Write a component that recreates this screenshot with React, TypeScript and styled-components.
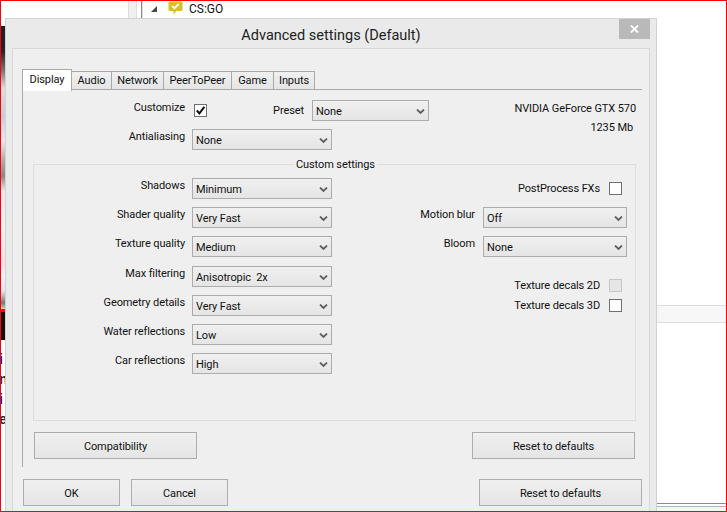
import React from "react";
import styled, { createGlobalStyle } from "styled-components";

const Global = createGlobalStyle`
  html, body { margin: 0; padding: 0; background: #fff; }
  body { font-family: Roboto, "Liberation Sans", sans-serif; font-size: 11px; letter-spacing: -0.1px; color: #111; }
`;

const Desktop = styled.div`
  position: relative; display: flex; box-sizing: border-box; width: 727px; height: 512px;
  border: 1px solid #f00; overflow: hidden; background: #fff;
`;
const LeftStrip = styled.div`
  flex: none; display: flex; flex-direction: column; width: 4px; overflow: hidden;
`;
const StripPhoto = styled.div`
  flex: none; margin-top: 25px; height: 283px;
  background: linear-gradient(180deg,
    #1c1f28 0, #23252c 25px, #777 45px, #ddd 62px, #c8ccd8 90px, #e8e8ee 115px, #aaa 135px, #888 150px, #e8e8ee 165px,
    #f4f0f2 200px, #fbdfe6 235px, #eef2f6 250px, #dfe6f0 265px, #777 277px, #d8d4c0 283px);
`;
const StripRed = styled.div` flex: none; height: 3px; background: #e01414; `;
const StripBlack = styled.div` flex: none; height: 28px; background: #111; `;
const StripLetters = styled.div`
  flex: none; display: flex; flex-direction: column; padding-top: 9px;
`;
const StripLetter = styled.span<{ $blue?: boolean }>`
  height: 20px; font: bold 14px/20px "Liberation Sans", sans-serif;
  margin-left: -2px; color: ${p => (p.$blue ? "#0a0a90" : "#222")};
`;
const Rear = styled.div` flex: 1; display: flex; flex-direction: column; `;
const TreeRow = styled.div`
  flex: none; display: flex; height: 304px; align-items: flex-start; padding-left: 123px;
`;
const Splitter = styled.div`
  flex: none; width: 7px; height: 304px; background: #efefef;
  border-left: 1px solid #ddd; border-right: 1px solid #ddd;
`;
const TreeLine = styled.div`
  flex: none; width: 1px; height: 304px; margin-left: 4px; background: #8a8a8a; box-shadow: 1px 0 0 #ddd;
`;
const TreeArrow = styled.svg` flex: none; margin: 5px 0 0 9px; `;
const TreeIcon = styled.svg` flex: none; margin: 0 0 0 10px; `;
const TreeText = styled.span`
  flex: none; margin: 0 0 0 6px; font: 12px/16px Roboto, sans-serif; letter-spacing: 0; color: #111;
`;
const RightBand = styled.div`
  flex: none; margin-left: auto; width: 69px; height: 16px;
  background: #f7f7f7; border-top: 1px solid #ddd; border-bottom: 1px solid #ddd;
`;
const BottomBand = styled.div`
  flex: none; margin: auto 0 0 auto; width: 69px; height: 7px;
  border-top: 1px solid #8c8c8c;
  background: linear-gradient(180deg, #fff 0 2px, #b4b4b4 2px 3px, #f5f5f5 3px);
`;

const Dialog = styled.div`
  position: absolute; left: 4px; top: 17px; box-sizing: border-box; width: 652px; height: 500px;
  display: flex; flex-direction: column; background: #eaeaea; border: 1px solid #d2d2d2;
`;
const TitleBar = styled.div`
  flex: none; height: 29px; display: flex; align-items: center; justify-content: center;
  font-size: 14.5px; letter-spacing: 0; color: #222; padding-top: 3px; box-sizing: border-box;
`;
const CloseButton = styled.div`
  position: absolute; top: 0; right: 6px; width: 31px; height: 20px; background: #b9b9b9;
  display: flex; align-items: center; justify-content: center;
`;
const Frame = styled.div`
  flex: 1; margin: 0 6px; padding: 20px 7px 0 9px; background: #efefef;
  border: 1px solid #d8d8d8; border-bottom: 0;
`;
const Tabs = styled.div` display: flex; align-items: flex-end; height: 21px; position: relative; `;
const Tab = styled.div<{ $active?: boolean; $w: number }>`
  box-sizing: border-box; width: ${p => p.$w}px; height: ${p => (p.$active ? 22 : 19)}px;
  margin: ${p => (p.$active ? "0 0 -1px" : "0")}; display: flex; align-items: center; justify-content: center;
  border: 1px solid #a9a9a9; border-left-width: ${p => (p.$active ? 1 : 0)}px;
  border-bottom: ${p => (p.$active ? "0" : "1px solid #a9a9a9")};
  background: ${p => (p.$active ? "#fff" : "linear-gradient(180deg,#f0f0f0,#e5e5e5)")};
  position: relative; z-index: ${p => (p.$active ? 1 : 0)};
  padding-bottom: ${p => (p.$active ? 3 : 0)}px; color: #111;
`;
const Pane = styled.div`
  box-sizing: border-box; height: 378px; border-top: 1px solid #a9a9a9; border-left: 1px solid #a9a9a9;
  margin-top: -1px; padding-top: 10px;
`;
const FormRow = styled.div<{ $mt?: number }>`
  display: flex; align-items: center; height: 21px; margin-top: ${p => p.$mt ?? 0}px;
`;
const FieldLabel = styled.div<{ $w: number; $up?: number; $gap?: number }>`
  flex: none; width: ${p => p.$w}px; text-align: right; white-space: nowrap;
  padding-bottom: ${p => p.$up ?? 7}px; box-sizing: border-box; margin-right: ${p => p.$gap ?? 7}px; color: #111;
`;
const Box = styled.div<{ $disabled?: boolean; $ml?: number }>`
  flex: none; box-sizing: border-box; width: 13px; height: 13px; margin-left: ${p => p.$ml ?? 0}px;
  border: 1px solid ${p => (p.$disabled ? "#c6c6c6" : "#707070")}; background: ${p => (p.$disabled ? "#e6e6e6" : "#fff")};
  display: flex; align-items: center; justify-content: center;
`;
const Select = styled.div<{ $w: number }>`
  flex: none; box-sizing: border-box; width: ${p => p.$w}px; height: 21px; display: flex; align-items: center;
  justify-content: space-between; padding: 2px 3px 0 3px; color: #111; white-space: pre;
  border: 1px solid #acacac; background: linear-gradient(180deg, #f0f0f0, #e5e5e5);
`;
const GpuBlock = styled.div`
  margin-left: auto; margin-right: 6px; padding-bottom: 4px; text-align: right; white-space: nowrap;
`;
const GpuMem = styled.div`
  margin-left: auto; margin-right: 9px; text-align: right; padding-bottom: 25px; white-space: nowrap;
`;
const Group = styled.div`
  position: relative; box-sizing: border-box; display: flex; width: 603px; height: 257px; margin: 14px 0 0 10px;
  padding: 13px 8px 0 0; border: 1px solid #dedede;
`;
const GroupTitle = styled.div`
  position: absolute; top: -7px; left: 260px; padding: 0 2px; background: #efefef; line-height: 14px; color: #111;
`;
const Col = styled.div` flex: none; display: flex; flex-direction: column; `;
const RightCol = styled(Col)` margin-left: auto; width: 244px; `;
const CheckRow = styled.div<{ $mt?: number; $h?: number }>`
  display: flex; align-items: center; justify-content: flex-end; height: ${p => p.$h ?? 20}px;
  margin-top: ${p => p.$mt ?? 0}px; padding-right: 5px; color: #111;
`;
const CheckLabel = styled.span` margin-right: 9px; white-space: nowrap; `;
const ButtonRow = styled.div` display: flex; justify-content: space-between; `;
const PaneButtons = styled(ButtonRow)` width: 601px; margin: 11px 0 0 11px; `;
const FooterButtons = styled(ButtonRow)` width: 619px; margin: 12px 0 0 1px; `;
const Btn = styled.div<{ $w: number }>`
  flex: none; box-sizing: border-box; width: ${p => p.$w}px; height: 27px; display: flex; align-items: center; justify-content: center;
  padding-top: 2px; border: 1px solid #adadad; background: linear-gradient(180deg, #f0f0f0, #e5e5e5); color: #111;
`;
const Pair = styled.div` display: flex; gap: 11px; `;

const Chevron = () => (
  <svg width="9" height="6" viewBox="0 0 9 6" aria-hidden="true">
    <path d="M1 0.5 L4.5 4 L8 0.5" fill="none" stroke="#606060" strokeWidth="1.8" />
  </svg>
);
const Drop = ({ w, v }: { w: number; v: string }) => (
  <Select $w={w}><span>{v}</span><Chevron /></Select>
);
const Tick = () => (
  <svg width="11" height="11" viewBox="0 0 11 11" aria-hidden="true">
    <path d="M1.8 5.5 L4.4 8.4 L9.3 1.8" fill="none" stroke="#111" strokeWidth="2" />
  </svg>
);

const leftRows: [string, string, number][] = [
  ["Shadows", "Minimum", 0],
  ["Shader quality", "Very Fast", 8],
  ["Texture quality", "Medium", 8],
  ["Max filtering", "Anisotropic  2x", 9],
  ["Geometry details", "Very Fast", 8],
  ["Water reflections", "Low", 8],
  ["Car reflections", "High", 8],
];
const tabs: [string, number][] = [["Audio", 40], ["Network", 52], ["PeerToPeer", 68], ["Game", 42], ["Inputs", 41]];

export default function App() {
  return (
    <Desktop>
      <Global />
      <LeftStrip>
        <StripPhoto />
        <StripRed />
        <StripBlack />
        <StripLetters>
          <StripLetter $blue>i</StripLetter>
          <StripLetter>n</StripLetter>
          <StripLetter $blue>i</StripLetter>
          <StripLetter>e</StripLetter>
        </StripLetters>
      </LeftStrip>
      <Rear>
        <TreeRow>
          <Splitter />
          <TreeLine />
          <TreeArrow width="7" height="6" viewBox="0 0 7 6"><path d="M0 6 L6 0 V6 Z" fill="#444" /></TreeArrow>
          <TreeIcon width="15" height="15" viewBox="0 0 15 15">
            <path d="M2 0.5 H13 Q14.5 0.5 14.5 2 V8.5 Q14.5 10 13 10 H8.5 L5.5 13.5 V10 H2 Q0.5 10 0.5 8.5 V2 Q0.5 0.5 2 0.5 Z" fill="#d9c21a" />
            <path d="M4.2 5 L6.5 7.3 L10.8 2.8" fill="none" stroke="#fff" strokeWidth="1.8" />
          </TreeIcon>
          <TreeText>CS:GO</TreeText>
        </TreeRow>
        <RightBand />
        <BottomBand />
      </Rear>
      <Dialog>
        <TitleBar>Advanced settings (Default)</TitleBar>
        <CloseButton>
          <svg width="9" height="8" viewBox="0 0 9 8" aria-hidden="true">
            <path d="M1 0.5 L8 7.5 M8 0.5 L1 7.5" stroke="#fff" strokeWidth="1.8" />
          </svg>
        </CloseButton>
        <Frame>
          <Tabs>
            <Tab $active $w={50}>Display</Tab>
            {tabs.map(([t, w]) => <Tab key={t} $w={w}>{t}</Tab>)}
          </Tabs>
          <Pane>
            <FormRow>
              <FieldLabel $w={162}>Customize</FieldLabel>
              <Box $ml={2}><Tick /></Box>
              <FieldLabel $w={97} $up={1} $gap={8}>Preset</FieldLabel>
              <Drop w={117} v="None" />
              <GpuBlock>NVIDIA GeForce GTX 570</GpuBlock>
            </FormRow>
            <FormRow $mt={8}>
              <FieldLabel $w={162}>Antialiasing</FieldLabel>
              <Drop w={140} v="None" />
              <GpuMem>1235 Mb</GpuMem>
            </FormRow>
            <Group>
              <GroupTitle>Custom settings</GroupTitle>
              <Col>
                {leftRows.map(([l, v, mt]) => (
                  <FormRow key={l} $mt={mt}>
                    <FieldLabel $w={151}>{l}</FieldLabel>
                    <Drop w={140} v={v} />
                  </FormRow>
                ))}
              </Col>
              <RightCol>
                <CheckRow $h={21}>
                  <CheckLabel>PostProcess FXs</CheckLabel>
                  <Box />
                </CheckRow>
                <FormRow $mt={8}>
                  <FieldLabel $w={92} $gap={8}>Motion blur</FieldLabel>
                  <Drop w={144} v="Off" />
                </FormRow>
                <FormRow $mt={8}>
                  <FieldLabel $w={92} $gap={8}>Bloom</FieldLabel>
                  <Drop w={144} v="None" />
                </FormRow>
                <CheckRow $mt={18}>
                  <CheckLabel>Texture decals 2D</CheckLabel>
                  <Box $disabled />
                </CheckRow>
                <CheckRow>
                  <CheckLabel>Texture decals 3D</CheckLabel>
                  <Box />
                </CheckRow>
              </RightCol>
            </Group>
            <PaneButtons>
              <Btn $w={163}>Compatibility</Btn>
              <Btn $w={163}>Reset to defaults</Btn>
            </PaneButtons>
          </Pane>
          <FooterButtons>
            <Pair>
              <Btn $w={97}>OK</Btn>
              <Btn $w={97}>Cancel</Btn>
            </Pair>
            <Btn $w={163}>Reset to defaults</Btn>
          </FooterButtons>
        </Frame>
      </Dialog>
    </Desktop>
  );
}
